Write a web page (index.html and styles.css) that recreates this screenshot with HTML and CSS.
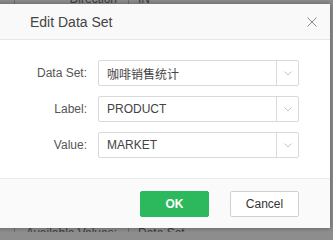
FILE: index.html
```html
<!DOCTYPE html>
<html>
<head>
<meta charset="utf-8">
<link rel="stylesheet" href="styles.css">
</head>
<body>
<div class="bg">
  <div class="bg-row bg-top"><span class="c0"></span><span class="c1">Direction</span><span class="c2">IN</span></div>
  <div class="bg-row bg-bottom"><span class="c0"></span><span class="c1">Available Values:</span><span class="c2">Data Set</span></div>
</div>
<div class="modal">
  <div class="modal-header">
    <span class="title">Edit Data Set</span>
    <svg class="close" width="10" height="10" viewBox="0 0 10 10"><path d="M0.5 0.5L9.5 9.5M9.5 0.5L0.5 9.5" stroke="#8a8a8a" stroke-width="1" fill="none"/></svg>
  </div>
  <div class="modal-body">
    <label class="lbl">Data Set:</label>
    <div class="select"><span class="val">咖啡销售统计</span><span class="arrow"><svg width="8" height="5" viewBox="0 0 8 5"><polyline points="0.5,0.5 4,4 7.5,0.5" stroke="#c4c4c4" fill="none"/></svg></span></div>
    <label class="lbl">Label:</label>
    <div class="select"><span class="val">PRODUCT</span><span class="arrow"><svg width="8" height="5" viewBox="0 0 8 5"><polyline points="0.5,0.5 4,4 7.5,0.5" stroke="#c4c4c4" fill="none"/></svg></span></div>
    <label class="lbl">Value:</label>
    <div class="select"><span class="val">MARKET</span><span class="arrow"><svg width="8" height="5" viewBox="0 0 8 5"><polyline points="0.5,0.5 4,4 7.5,0.5" stroke="#c4c4c4" fill="none"/></svg></span></div>
  </div>
  <div class="modal-footer">
    <button class="btn btn-ok">OK</button>
    <button class="btn btn-cancel">Cancel</button>
  </div>
</div>
</body>
</html>
```
FILE: styles.css
```css
html, body {
  margin: 0;
  padding: 0;
}
body {
  width: 333px;
  height: 232px;
  overflow: hidden;
  position: relative;
  background: #8d8d8d;
  font-family: "Liberation Sans", Arial, "Noto Sans CJK SC", sans-serif;
}
.bg {
  height: 232px;
  display: flex;
  flex-direction: column;
  justify-content: space-between;
  overflow: hidden;
}
.bg-row {
  display: grid;
  grid-template-columns: 14px 114px 1fr;
  height: 22px;
  line-height: 22px;
  font-size: 12px;
  color: #3c3c3c;
  flex: none;
}
.bg-top { margin-top: -12px; }
.bg-bottom { margin-bottom: -12px; }
.bg-row .c1 {
  border-left: 1px solid #6e6e6e;
  text-align: right;
  padding-right: 11px;
}
.bg-row .c2 {
  border-left: 1px solid #6e6e6e;
  padding-left: 9px;
}
.modal {
  position: absolute;
  left: -30px;
  top: 4px;
  width: 360px;
  background: #fff;
  box-shadow: 0 0 5px rgba(0, 0, 0, 0.35);
}
.modal-header {
  height: 35px;
  background: #f9f9f9;
  border-bottom: 1px solid #e6e6e6;
  display: flex;
  align-items: center;
  justify-content: space-between;
  padding: 0 13px 0 60px;
}
.title {
  font-size: 14px;
  color: #444;
}
.close {
  display: block;
  margin-top: 1px;
}
.modal-body {
  display: grid;
  grid-template-columns: 117px 201px;
  column-gap: 11px;
  row-gap: 10px;
  padding: 20px 0;
  align-items: center;
}
.lbl {
  text-align: right;
  font-size: 12px;
  color: #555;
}
.select {
  height: 26px;
  box-sizing: border-box;
  border: 1px solid #d9d9d9;
  border-radius: 2px;
  display: flex;
  align-items: center;
  background: #fff;
}
.val {
  flex: 1;
  padding-left: 8px;
  font-size: 12px;
  color: #444;
}
.arrow {
  width: 22px;
  height: 100%;
  box-sizing: border-box;
  border-left: 1px solid #d9d9d9;
  display: flex;
  align-items: center;
  justify-content: center;
}
.arrow svg { display: block; }
.modal-footer {
  border-top: 1px solid #ececec;
  background: #fafafa;
  display: flex;
  justify-content: flex-end;
  gap: 21px;
  padding: 12px 31px 11px 0;
}
.btn {
  width: 69px;
  height: 26px;
  box-sizing: border-box;
  border-radius: 2px;
  font-family: "Liberation Sans", Arial, sans-serif;
  font-size: 12px;
  padding: 0;
  margin: 0;
}
.btn-ok {
  background: #2cb85c;
  border: 1px solid #2cb85c;
  color: #fff;
  font-weight: bold;
}
.btn-cancel {
  background: #fff;
  border: 1px solid #d0d0d0;
  color: #333;
}
```
